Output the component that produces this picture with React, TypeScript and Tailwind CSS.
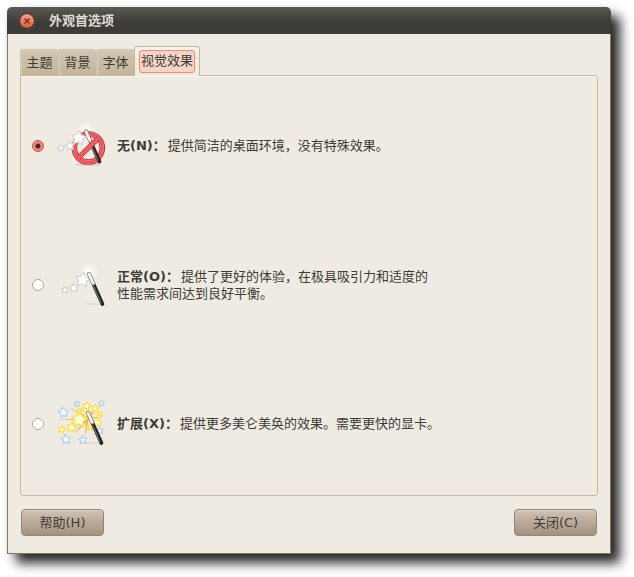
import { useState } from "react";
import type { ReactNode } from "react";

type StarProps = { x: number; y: number; r: number; fill: string; stroke: string; turn?: number };

function starPoints(x: number, y: number, r: number, turn: number) {
  return Array.from({ length: 10 }, (_, i) => {
    const radius = i % 2 === 0 ? r : r * 0.55;
    const a = ((turn - 90 + i * 36) * Math.PI) / 180;
    return `${(x + radius * Math.cos(a)).toFixed(2)},${(y + radius * Math.sin(a)).toFixed(2)}`;
  }).join(" ");
}

function Star({ x, y, r, fill, stroke, turn = -8 }: StarProps) {
  return (
    <polygon
      points={starPoints(x, y, r, turn)}
      fill={fill}
      stroke={stroke}
      strokeWidth="1.3"
      strokeLinejoin="round"
    />
  );
}

function Wand({ x, y }: { x: number; y: number }) {
  return (
    <g transform={`translate(${x} ${y})`} strokeLinecap="round">
      <path d="M0 0L13.4 30" stroke="#222422" strokeWidth="3.8" />
      <path d="M0 0L4.2 9.6" stroke="#a3a6a1" strokeWidth="3.8" />
      <path d="M0 0L4 9.1" stroke="#f6f6f3" strokeWidth="2.4" />
      <path d="M4.8 12.6L12 29" stroke="#8a8d88" strokeWidth="0.9" />
    </g>
  );
}

function PaleStars({ x, y }: { x: number; y: number }) {
  const look = { fill: "#ffffff", stroke: "#d3d7cf" };
  return (
    <g transform={`translate(${x} ${y})`}>
      <Star x={4} y={26} r={3.7} {...look} />
      <Star x={12.8} y={24} r={4.8} {...look} />
      <Star x={21.5} y={16} r={7.6} turn={8} {...look} />
    </g>
  );
}

function Glow({ id, x, y }: { id: string; x: number; y: number }) {
  return (
    <>
      <defs>
        <radialGradient id={id}>
          <stop offset="0" stopColor="#fff" />
          <stop offset="1" stopColor="#fff" stopOpacity="0" />
        </radialGradient>
      </defs>
      <circle cx={x} cy={y} r="9" fill={`url(#${id})`} />
    </>
  );
}

function NoEffectsIcon() {
  return (
    <svg viewBox="0 0 48 48" className="size-12 shrink-0 overflow-visible" aria-hidden="true">
      <Glow id="glow-none" x={29} y={9} />
      <ellipse cx="31" cy="42.5" rx="13" ry="1.6" fill="#000" opacity=".1" />
      <circle cx="31.3" cy="26" r="14" fill="none" stroke="#cc1f25" strokeWidth="5.6" />
      <circle cx="31.3" cy="26" r="14" fill="none" stroke="#f2868a" strokeWidth="3.8" />
      <circle cx="31.3" cy="26" r="14" fill="none" stroke="#e8555a" strokeWidth="2.4" />
      <Wand x={29} y={9.5} />
      <path d="M21.2 36L41.4 16" stroke="#cc1f25" strokeWidth="5" />
      <path d="M20.8 36.4L41.8 15.6" stroke="#f2868a" strokeWidth="3.4" />
      <path d="M20.5 36.7L42.1 15.3" stroke="#e8555a" strokeWidth="2.2" />
      <PaleStars x={0} y={0} />
    </svg>
  );
}

function NormalIcon() {
  return (
    <svg viewBox="0 0 48 48" className="size-12 shrink-0 overflow-visible" aria-hidden="true">
      <Glow id="glow-normal" x={32} y={11} />
      <ellipse cx="36" cy="43" rx="9" ry="1.2" fill="#000" opacity=".05" />
      <PaleStars x={4} y={3} />
      <Wand x={32} y={13} />
    </svg>
  );
}

const blueStars = [
  [6.3, 12.4, 5.4], [20, 4, 3], [44.6, 3.4, 3.2], [9, 39.4, 5], [26, 40, 4.2], [43, 31, 3.8],
];
const yellowStars = [
  [29.7, 6, 4], [38, 8.4, 4], [43, 14, 2.8], [23, 10.8, 2.8], [33.5, 27.3, 3.4],
  [40.3, 22.4, 4.8], [14.6, 27.4, 5], [4.7, 29.4, 3.8], [22.3, 19.7, 7.8],
];

function ExtraIcon() {
  return (
    <svg viewBox="0 0 48 48" className="size-12 shrink-0 overflow-visible" aria-hidden="true">
      <defs>
        <radialGradient id="glow-extra">
          <stop offset="0" stopColor="#ffe53b" />
          <stop offset="1" stopColor="#fff6b0" stopOpacity="0" />
        </radialGradient>
      </defs>
      <ellipse cx="36" cy="43" rx="9" ry="1.2" fill="#000" opacity=".05" />
      <circle cx="28" cy="17" r="17" fill="url(#glow-extra)" opacity=".6" />
      <path
        d="M29 18L8 5L27 15ZM29 18L0 20L27 20ZM29 17L17 35L31 20ZM29 18L28 38L32 18ZM30 16L44 4L32 18ZM30 18L47 27L32 20ZM30 17L46 17L30 19Z"
        fill="#f8a64c"
        opacity=".8"
      />
      {blueStars.map(([x, y, r]) => (
        <Star key={`${x}-${y}`} x={x} y={y} r={r} fill="#f4f9ff" stroke="#b4cff0" />
      ))}
      {yellowStars.map(([x, y, r]) => (
        <Star key={`${x}-${y}`} x={x} y={y} r={r} fill="#fffde8" stroke="#f9e23c" turn={8} />
      ))}
      <Wand x={31} y={13} />
    </svg>
  );
}

const options: { id: string; name: string; icon: ReactNode; text: ReactNode }[] = [
  { id: "none", name: "无(N)：", icon: <NoEffectsIcon />, text: "提供简洁的桌面环境，没有特殊效果。" },
  {
    id: "normal",
    name: "正常(O)：",
    icon: <NormalIcon />,
    text: (
      <>
        提供了更好的体验，在极具吸引力和适度的
        <br />
        性能需求间达到良好平衡。
      </>
    ),
  },
  { id: "extra", name: "扩展(X)：", icon: <ExtraIcon />, text: "提供更多美仑美奂的效果。需要更快的显卡。" },
];

const buttonClass =
  "h-[27px] w-[83px] rounded-[4px] border border-[#958671] bg-linear-to-b from-[#d0c3b1] to-[#a39280] shadow-[inset_0_1px_0_#ddd3c5]";

export default function App() {
  const [effect, setEffect] = useState("none");

  return (
    <div className="flex min-h-screen bg-white pt-[7px] pr-[23px] pb-[23px] pl-[7px] font-['DejaVu_Sans','Noto_Sans_CJK_SC',sans-serif] text-[13px] leading-[17px] text-[#3c3b37]">
      <main className="flex flex-1 flex-col rounded-t-[5px] rounded-b-[3px] bg-[#efebe3] shadow-[9px_9px_12px_rgba(0,0,0,0.85),0_0_6px_rgba(0,0,0,0.08)]">
        <header className="flex h-[27px] items-center gap-[14px] rounded-t-[5px] bg-linear-to-b from-[#5b5a54] to-[#3c3b37] to-60% pl-3">
          <button
            aria-label="关闭窗口"
            className="flex size-4 items-center justify-center rounded-full border border-[#2d2b28] bg-linear-to-b from-[#f9a184] to-[#e2562d] shadow-[0_0_0_1px_#55534d]"
          >
            <svg viewBox="0 0 8 8" className="size-2" aria-hidden="true">
              <path d="M1.5 1.5L6.5 6.5M6.5 1.5L1.5 6.5" stroke="#573a2e" strokeWidth="1.3" />
            </svg>
          </button>
          <h1 className="font-bold text-[#dfdbd2]">外观首选项</h1>
        </header>

        <div className="flex flex-1 flex-col border-x border-b border-[#85765f] px-3 pt-3 pb-[17px]">
          <div role="tablist" className="z-10 -mb-px flex items-end">
            {["主题", "背景", "字体"].map((tab) => (
              <button
                key={tab}
                role="tab"
                aria-selected="false"
                className="mb-px h-[26px] w-[38px] rounded-t-[3px] border-t border-l border-[#cdbfa5] bg-linear-to-b from-[#d2c6b1] to-[#c3b59c] shadow-[inset_1px_1px_0_#d9cfbd]"
              >
                {tab}
              </button>
            ))}
            <button
              role="tab"
              aria-selected="true"
              className="flex h-[30px] w-[66px] items-start justify-center rounded-t-[4px] border border-b-0 border-[#c5b697] bg-linear-to-b from-[#f8f5f0] to-[#efebe3] to-40% pt-[3px]"
            >
              <span className="rounded-[3px] border border-[#f58b6c] bg-[#f6d5c7] px-px pt-px pb-[3px]">视觉效果</span>
            </button>
          </div>

          <fieldset
            role="tabpanel"
            className="grid flex-1 grid-rows-3 rounded-[3px] rounded-tl-none border border-[#c8b99e] pb-0.5 pl-[11px] shadow-[inset_0_1px_0_#faf8f4]"
          >
            {options.map(({ id, name, icon, text }) => (
              <div key={id} className="flex items-center gap-[13px]">
                <input
                  type="radio"
                  id={id}
                  name="effect"
                  checked={effect === id}
                  onChange={() => setEffect(id)}
                  className="size-3 shrink-0 appearance-none rounded-full border border-[#b7a88d] bg-white checked:border-[#c05a43] checked:bg-[radial-gradient(circle,#35302e_0_2px,#f58a75_3px,#f47b60_100%)]"
                />
                <label htmlFor={id} className="flex items-center gap-3">
                  {icon}
                  <span>
                    <strong className="mr-0.5">{name}</strong>
                    {text}
                  </span>
                </label>
              </div>
            ))}
          </fieldset>

          <footer className="flex justify-between px-px pt-[13px]">
            <button className={buttonClass}>帮助(H)</button>
            <button className={buttonClass}>关闭(C)</button>
          </footer>
        </div>
      </main>
    </div>
  );
}
